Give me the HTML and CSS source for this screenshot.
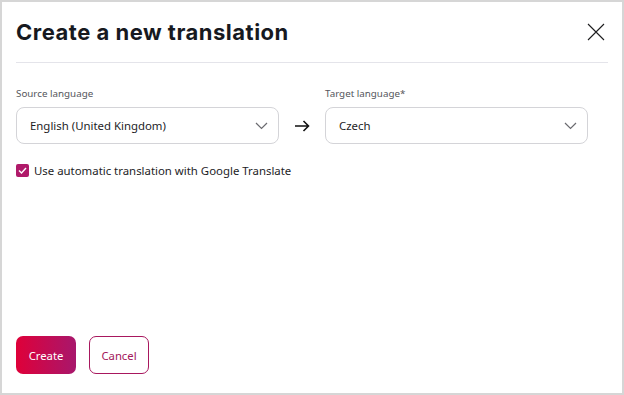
FILE: index.html
```html
<!DOCTYPE html>
<html lang="en">
<head>
    <meta charset="UTF-8">
    <meta name="viewport" content="width=device-width, initial-scale=1.0">
    <title>Create a new translation</title>
    <link rel="stylesheet" href="styles.css">
</head>
<body>
    <div class="dialog">
        <header class="dialog-header">
            <h1>Create a new translation</h1>
            <button type="button" class="btn-close" aria-label="Close">
                <svg width="18" height="18" viewBox="0 0 18 18">
                    <path d="M1 1L17 17M17 1L1 17" stroke="#1d1d1f" stroke-width="1.1" fill="none"/>
                </svg>
            </button>
        </header>

        <div class="dialog-body">
            <div class="lang-row">
                <div class="field">
                    <label for="source">Source language</label>
                    <div class="select">
                        <span>English (United Kingdom)</span>
                        <svg class="chevron" width="13" height="8" viewBox="0 0 13 8">
                            <path d="M1 1L6.5 6.5L12 1" stroke="#6b6b70" stroke-width="1.2" fill="none"/>
                        </svg>
                    </div>
                </div>
                <div class="arrow">
                    <svg width="15" height="12" viewBox="0 0 15 12">
                        <path d="M0 6H13.5M8.5 1L13.5 6L8.5 11" stroke="#111" stroke-width="1.6" fill="none"/>
                    </svg>
                </div>
                <div class="field">
                    <label for="target">Target language*</label>
                    <div class="select">
                        <span>Czech</span>
                        <svg class="chevron" width="13" height="8" viewBox="0 0 13 8">
                            <path d="M1 1L6.5 6.5L12 1" stroke="#6b6b70" stroke-width="1.2" fill="none"/>
                        </svg>
                    </div>
                </div>
            </div>

            <label class="check">
                <span class="checkbox">
                    <svg width="9" height="7" viewBox="0 0 9 7">
                        <path d="M1 3.5L3.5 6L8 1" stroke="#fff" stroke-width="1.4" fill="none"/>
                    </svg>
                </span>
                Use automatic translation with Google Translate
            </label>
        </div>

        <footer class="dialog-footer">
            <button type="button" class="btn-create">Create</button>
            <button type="button" class="btn-cancel">Cancel</button>
        </footer>
    </div>
</body>
</html>
```

FILE: styles.css
```css
* {
    box-sizing: border-box;
}

body {
    margin: 0;
    padding: 0;
    font-family: "Noto Sans", "Open Sans", sans-serif;
    color: #1d1d1f;
    background-color: #ffffff;
}

.dialog {
    width: 624px;
    height: 395px;
    border: 2px solid #d6d6d6;
    background: #ffffff;
    padding: 0 14px 19px;
    display: flex;
    flex-direction: column;
}

.dialog-header {
    display: flex;
    justify-content: space-between;
    align-items: center;
    height: 61px;
    border-bottom: 1px solid #e4e4ea;
}

.dialog-header h1 {
    margin: 0;
    font-family: Inter, "Open Sans", sans-serif;
    font-size: 22px;
    font-weight: 700;
    color: #17191f;
    letter-spacing: 0.5px;
}

.btn-close {
    border: none;
    background: none;
    padding: 0;
    margin-right: 3px;
    width: 18px;
    height: 18px;
    cursor: pointer;
}

.btn-close svg {
    display: block;
}

.dialog-body {
    flex: 1;
    padding-top: 24px;
}

.lang-row {
    display: grid;
    grid-template-columns: 263px 46px 263px;
    align-items: end;
}

.field label {
    display: block;
    font-size: 9.8px;
    color: #55565c;
    margin-bottom: 7px;
}

.select {
    height: 37px;
    border: 1px solid #d4d4d8;
    border-radius: 8px;
    padding: 0 10px 0 13px;
    display: flex;
    align-items: center;
    justify-content: space-between;
    font-size: 11.4px;
    color: #1d1d1f;
}

.arrow {
    height: 37px;
    display: flex;
    align-items: center;
    justify-content: center;
}

.arrow svg {
    margin-left: 1px;
}

.check {
    display: flex;
    align-items: center;
    gap: 5px;
    margin-top: 19px;
    font-size: 11.4px;
    color: #1d1d1f;
}

.checkbox {
    width: 13px;
    height: 13px;
    border-radius: 2px;
    background-color: #b01a6a;
    display: flex;
    align-items: center;
    justify-content: center;
}

.dialog-footer {
    display: flex;
    gap: 13px;
}

.dialog-footer button {
    height: 38px;
    width: 60px;
    border-radius: 7px;
    font-family: "Noto Sans", "Open Sans", sans-serif;
    font-size: 11.3px;
    cursor: pointer;
    padding: 0;
}

.btn-create {
    border: none;
    color: #ffffff;
    background: linear-gradient(90deg, #df0039, #a8176c);
}

.btn-cancel {
    border: 1px solid #a8175e;
    background: #ffffff;
    color: #a3175b;
}
```
